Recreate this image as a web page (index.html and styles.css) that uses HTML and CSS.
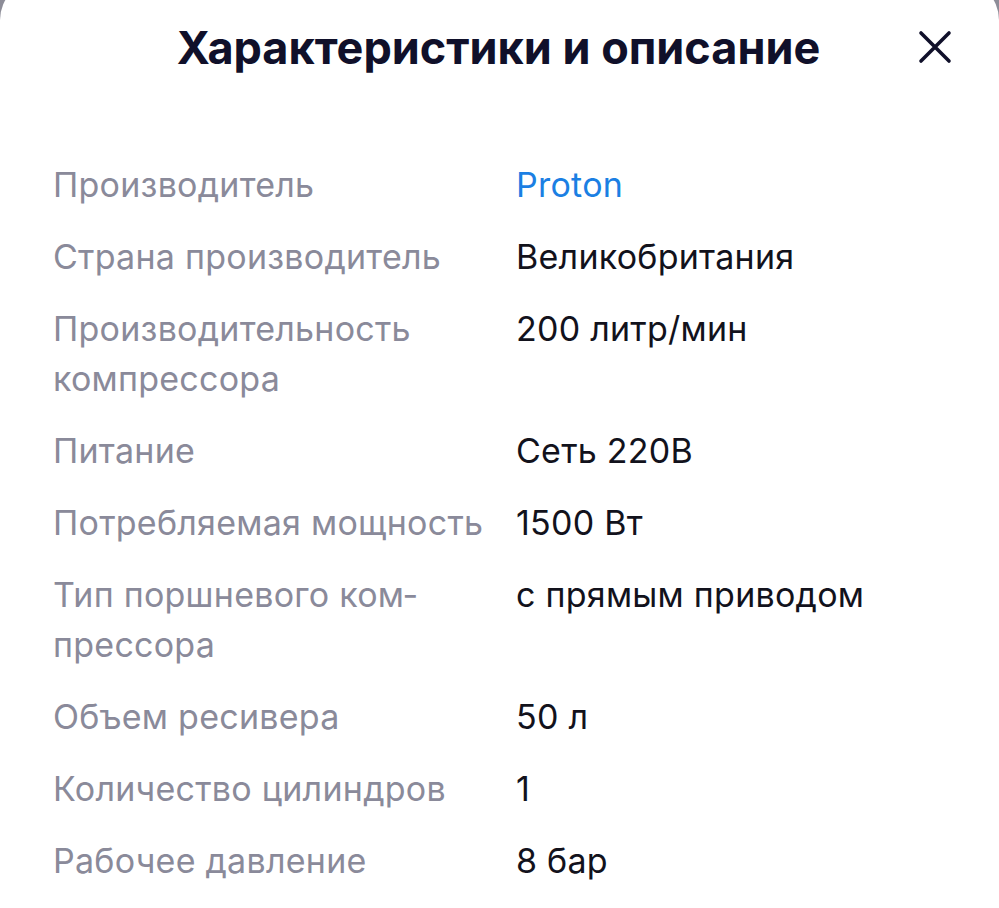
FILE: index.html
```html
<!DOCTYPE html>
<html lang="ru">
<head>
<meta charset="utf-8">
<link rel="stylesheet" href="styles.css">
</head>
<body>
<div class="sheet">
  <header class="head">
    <h1 class="title">Характеристики и описание</h1>
    <button class="close" aria-label="Закрыть">
      <svg width="34" height="34" viewBox="0 0 34 34"><path d="M3 3L31 31M31 3L3 31" stroke="#10102a" stroke-width="3.6" stroke-linecap="round"/></svg>
    </button>
  </header>
  <dl class="specs">
    <dt>Производитель</dt><dd><a class="link" href="#">Proton</a></dd>
    <dt>Страна производитель</dt><dd>Великобритания</dd>
    <dt>Производительность компрессора</dt><dd>200 литр/мин</dd>
    <dt>Питание</dt><dd>Сеть 220В</dd>
    <dt>Потребляемая мощность</dt><dd>1500 Вт</dd>
    <dt>Тип поршневого ком&shy;прессора</dt><dd>с прямым приводом</dd>
    <dt>Объем ресивера</dt><dd>50 л</dd>
    <dt>Количество цилиндров</dt><dd>1</dd>
    <dt>Рабочее давление</dt><dd>8 бар</dd>
  </dl>
</div>
</body>
</html>
```
FILE: styles.css
```css
html, body {
  margin: 0;
  padding: 0;
  background: #8d8d98;
  height: 100%;
  overflow: hidden;
}
.sheet {
  background: #ffffff;
  margin-top: -20px;
  border-radius: 40px 40px 0 0;
  min-height: 940px;
  padding: 20px 0 0;
  font-family: Inter, "Noto Sans", sans-serif;
}
.head {
  position: relative;
  height: 94px;
  display: flex;
  align-items: center;
  justify-content: center;
}
.title {
  margin: 0;
  font-size: 45px;
  font-weight: 700;
  color: #10102a;
  letter-spacing: 0;
  padding-right: 2px;
}
.close {
  position: absolute;
  right: 47px;
  top: 30px;
  width: 34px;
  height: 34px;
  padding: 0;
  border: 0;
  background: none;
}
.specs {
  margin: 66px 0 0 53px;
  display: grid;
  grid-template-columns: 440px 1fr;
  column-gap: 23px;
  row-gap: 22px;
  font-size: 34px;
  letter-spacing: 0.25px;
  line-height: 50px;
}
.specs dt {
  color: #8a8a9a;
  hyphens: manual;
}
.specs dd {
  margin: 0;
  color: #12121c;
}
.link {
  color: #1b7fe3;
  text-decoration: none;
}
```
